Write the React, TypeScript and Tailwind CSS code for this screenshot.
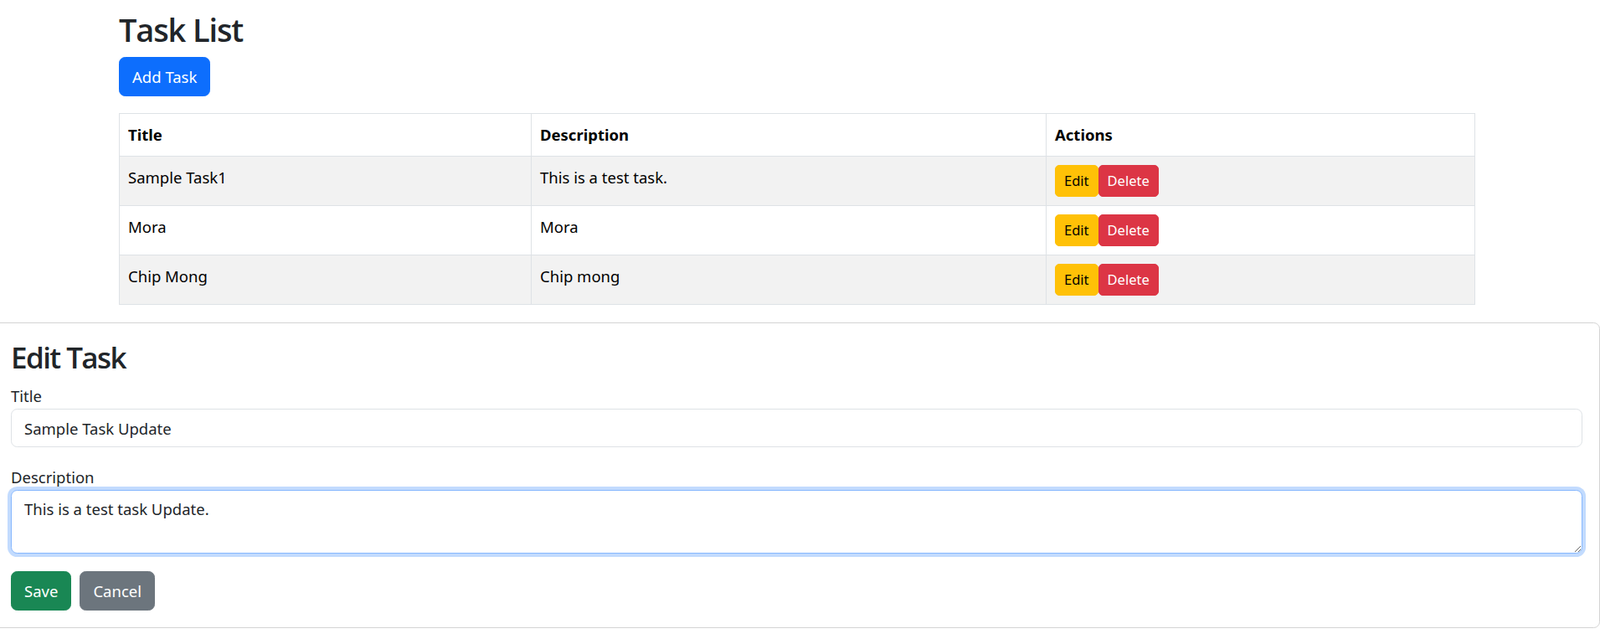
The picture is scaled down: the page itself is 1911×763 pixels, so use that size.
import { useEffect, useRef } from "react";

const tasks = [
  { title: "Sample Task1", description: "This is a test task." },
  { title: "Mora", description: "Mora" },
  { title: "Chip Mong", description: "Chip mong" },
];

export default function App() {
  const descRef = useRef<HTMLTextAreaElement>(null);

  useEffect(() => {
    // caret sits right before the final period, like in the form being edited
    const el = descRef.current;
    if (el) {
      el.focus();
      el.setSelectionRange(26, 26);
    }
  }, []);

  return (
    <div className="min-h-screen bg-white font-['Noto_Sans',sans-serif] text-[18.5px] leading-[30px] text-[#212529]">
      <div className="ml-[142px] w-[1619px]">
        <h1 className="mt-[9px] mb-[7px] h-[52px] font-['Open_Sans',sans-serif] text-[38px] leading-[52px] font-semibold tracking-[-0.03em] text-[#212529]">
          Task List
        </h1>
        <button className="mb-[20px] h-[47px] rounded-[7.5px] border border-[#0d6efd] bg-[#0d6efd] px-[15px] text-white">
          Add Task
        </button>

        <table className="w-[1619px] table-fixed border-collapse border border-[#dee2e6] text-black">
          <colgroup>
            <col className="w-[492px]" />
            <col className="w-[615px]" />
            <col className="w-[512px]" />
          </colgroup>
          <thead>
            <tr>
              <th className="border border-[#dee2e6] p-[10px] text-left align-top font-bold">
                Title
              </th>
              <th className="border border-[#dee2e6] p-[10px] text-left align-top font-bold">
                Description
              </th>
              <th className="border border-[#dee2e6] p-[10px] text-left align-top font-bold">
                Actions
              </th>
            </tr>
          </thead>
          <tbody>
            {tasks.map((task, i) => (
              <tr key={task.title} className={i % 2 === 0 ? "bg-[#f2f2f2]" : "bg-white"}>
                <td className="border border-[#dee2e6] p-[10px] align-top">{task.title}</td>
                <td className="border border-[#dee2e6] p-[10px] align-top">{task.description}</td>
                <td className="border border-[#dee2e6] p-[10px] align-top">
                  <div className="flex">
                    <button className="h-[38px] rounded-[5px] border border-[#ffc107] bg-[#ffc107] px-[10px] text-[16.5px] leading-[26px] text-black">
                      Edit
                    </button>
                    <button className="h-[38px] rounded-[5px] border border-[#dc3545] bg-[#dc3545] px-[10px] text-[16.5px] leading-[26px] text-white">
                      Delete
                    </button>
                  </div>
                </td>
              </tr>
            ))}
          </tbody>
        </table>
      </div>

      <div className="mt-[21px] ml-[-8px] w-[1919px] rounded-[7.5px] border border-[#d3d3d3] px-[20px] pt-[17px] pb-[20px]">
        <h2 className="mb-[7px] h-[48px] font-['Open_Sans',sans-serif] text-[35px] leading-[48px] font-semibold tracking-[-0.045em]">
          Edit Task
        </h2>

        <label className="block h-[30px]">Title</label>
        <input
          className="mb-[21px] block h-[46px] w-full rounded-[7.5px] border border-[#dee2e6] bg-white px-[15px] text-[#212529] outline-none"
          defaultValue="Sample Task Update"
        />

        <label className="block h-[30px]">Description</label>
        <textarea
          ref={descRef}
          className="mb-[21px] block h-[76px] w-full rounded-[7.5px] border border-[#86b7fe] bg-white px-[15px] pt-[7px] text-[#212529] shadow-[0_0_0_4px_rgba(13,110,253,0.25)] outline-none"
          defaultValue="This is a test task Update."
        />

        <div className="flex gap-[10px]">
          <button className="h-[47px] rounded-[7.5px] border border-[#198754] bg-[#198754] px-[15px] text-white">
            Save
          </button>
          <button className="h-[47px] rounded-[7.5px] border border-[#6c757d] bg-[#6c757d] px-[15px] text-white">
            Cancel
          </button>
        </div>
      </div>
    </div>
  );
}
